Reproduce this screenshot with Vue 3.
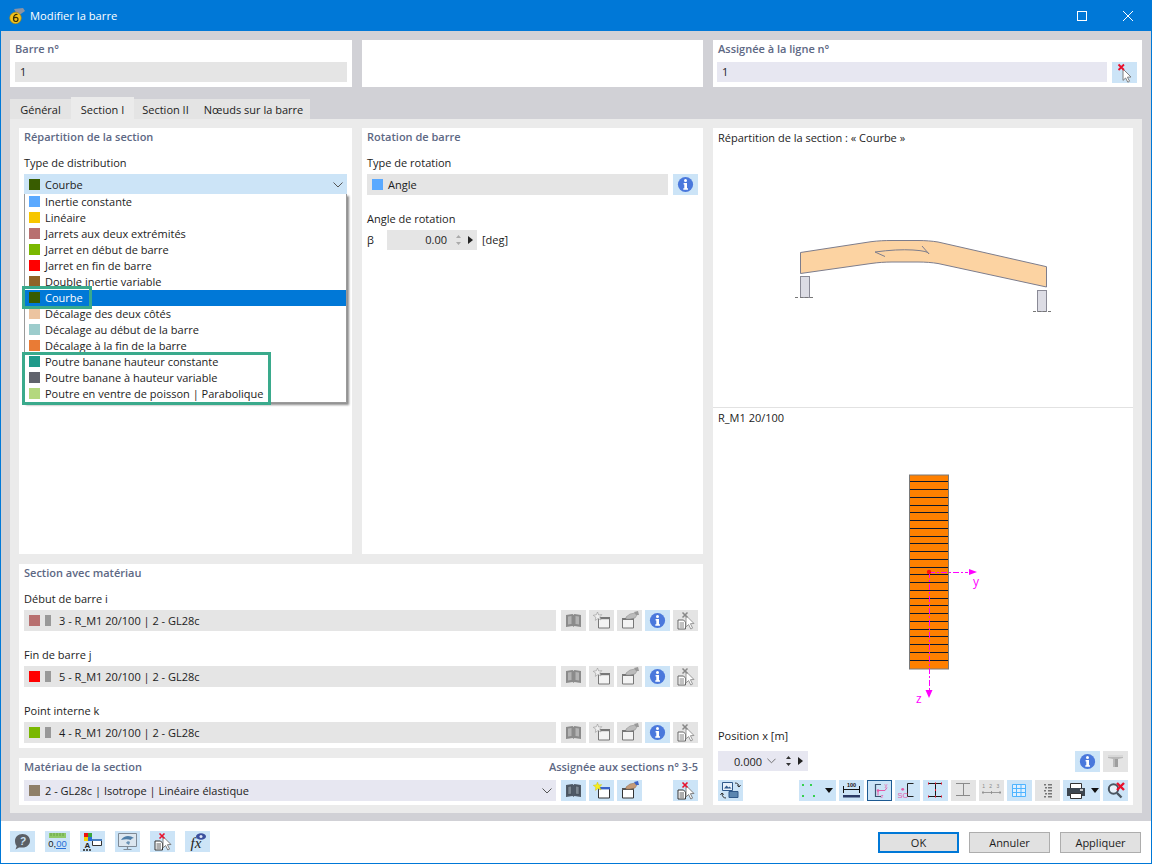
<script setup>
const options = [
  ['Inertie constante', '#5aa9ff'], ['Linéaire', '#f7c600'], ['Jarrets aux deux extrémités', '#b87070'],
  ['Jarret en début de barre', '#7ab800'], ['Jarret en fin de barre', '#ff0000'], ['Double inertie variable', '#8f6428'],
  ['Courbe', '#385c00'], ['Décalage des deux côtés', '#ecc4a0'], ['Décalage au début de la barre', '#9ccccc'],
  ['Décalage à la fin de la barre', '#e97b35'], ['Poutre banane hauteur constante', '#1f9a8a'],
  ['Poutre banane à hauteur variable', '#60636c'], ['Poutre en ventre de poisson | Parabolique', '#b4d87e'],
]
const sections = [
  ['Début de barre i', '#b87070', '3 - R_M1 20/100 | 2 - GL28c'],
  ['Fin de barre j', '#ff0000', '5 - R_M1 20/100 | 2 - GL28c'],
  ['Point interne k', '#7ab800', '4 - R_M1 20/100 | 2 - GL28c'],
]
const layers = [65,89,113,136,157,181,205,229,250,274,298,322,343,367,391,415,436,460,484,508,529,553,577,601].map(v => Math.floor(460 + v / 3) + 0.5)
</script>

<template>
  <svg class="defs" aria-hidden="true">
    <symbol id="i-info" viewBox="0 0 25 21">
      <circle cx="12.5" cy="10.5" r="7.6" fill="#4a78dc"/>
      <circle cx="12.5" cy="6.4" r="1.5" fill="#fff"/>
      <path d="M10.6 9h3.4v5.3h1v1.4h-4.7v-1.4h1V10.400h-.7z" fill="#fff"/>
    </symbol>
    <symbol id="i-book" viewBox="0 0 25 21">
      <path d="M5 5l6.6-1 .9 1 .9-1 6.6 1v12l-6.6-1-.9 1-.9-1-6.6 1z" fill="#4f5a66"/>
      <path d="M7 6.500l3.500-.5v8l-3.500.6zM18 6.500l-3.500-.5v8l3.500.6z" fill="#7c8790" stroke="#39424b" stroke-width=".5"/>
    </symbol>
    <symbol id="i-book-off" viewBox="0 0 25 21">
      <path d="M5 5l6.600-1 .9 1 .9-1 6.600 1v12l-6.600-1-.9 1-.9-1-6.600 1z" fill="#8b8b8b"/>
      <path d="M7 6.500l3.500-.5v8l-3.500.6zM18 6.500l-3.500-.5v8l3.500.6z" fill="#b3b3b3"/>
    </symbol>
    <symbol id="i-new" viewBox="0 0 25 21">
      <path d="M9.500 7.500h11V18h-11z" fill="#fff" stroke="#333"/>
      <path d="M9 7h12v2.400H9z" fill="#3a62c8"/>
      <path d="M8.500 2l1.200 3 3.100-.4-2 2.300 1.200 3-3-1.400-2.700 1.900.5-3.200-2.600-1.900 3.200-.6z" fill="#f6ee1f" stroke="#c7b900" stroke-width=".4"/>
    </symbol>
    <symbol id="i-new-off" viewBox="0 0 25 21">
      <path d="M9.500 7.500h11V18h-11z" fill="#f3f3f3" stroke="#777"/>
      <path d="M9 7h12v2.200H9z" fill="#777"/>
      <path d="M8.500 2l1.200 3 3.100-.4-2 2.300 1.200 3-3-1.400-2.700 1.900.5-3.200-2.600-1.900 3.200-.6z" fill="#eee" stroke="#999" stroke-width=".6"/>
    </symbol>
    <symbol id="i-edit" viewBox="0 0 25 21">
      <path d="M5.500 8.500h11V18h-11z" fill="#fff" stroke="#333"/>
      <path d="M5 8h12v2H5z" fill="#555"/>
      <path d="M9 7l4-3 5-1 2 2-2 3-5 1h-4z" fill="#c59a77" stroke="#8b6a50" stroke-width=".5"/>
      <path d="M17 2l4-1 1 4h-3z" fill="#3a62c8"/>
    </symbol>
    <symbol id="i-edit-off" viewBox="0 0 25 21">
      <path d="M5.500 8.500h11V18h-11z" fill="#f3f3f3" stroke="#777"/>
      <path d="M5 8h12v2H5z" fill="#777"/>
      <path d="M9 7l4-3 5-1 2 2-2 3-5 1h-4z" fill="#bbb" stroke="#888" stroke-width=".5"/>
      <path d="M17 2l4-1 1 4h-3z" fill="#999"/>
    </symbol>
    <symbol id="i-pick" viewBox="0 0 25 21">
      <path d="M5 10h5.500l2 2v7H5z" fill="#fff" stroke="#333"/>
      <path d="M6.500 13h4.500M6.500 15h4.500M6.500 17h4.500" stroke="#333" stroke-width=".8"/>
      <path d="M13 5.500l8 8-3.600.2 2.200 4.400-1.800.9-2.200-4.500-2.600 2.400z" fill="#fff" stroke="#7f7f7f"/>
      <path d="M9.500 2.500l5 5M14.500 2.500l-5 5" stroke="#e8112d" stroke-width="1.600"/>
    </symbol>
    <symbol id="i-pick-off" viewBox="0 0 25 21">
      <path d="M5 10h5.500l2 2v7H5z" fill="#fff" stroke="#666"/>
      <path d="M6.500 13h4.500M6.500 15h4.500M6.500 17h4.500" stroke="#666" stroke-width=".8"/>
      <path d="M13 5.500l8 8-3.600.2 2.200 4.400-1.800.9-2.200-4.500-2.600 2.400z" fill="#fff" stroke="#999"/>
      <path d="M9.500 2.500l5 5M14.500 2.500l-5 5" stroke="#888" stroke-width="1.500"/>
    </symbol>
    <symbol id="i-cursor" viewBox="0 0 25 21">
      <path d="M11 7l8 8-3.600.2 2.200 4-1.800 1-2.200-4.200-2.600 2.400z" fill="#fff" stroke="#7f7f7f"/>
      <path d="M6.500 2.500l5.500 5.500M12 2.500l-5.500 5.500" stroke="#e8112d" stroke-width="1.800"/>
    </symbol>
    <symbol id="i-t" viewBox="0 0 25 21">
      <path d="M5 4h15v3l-5 1v8h-5V8L5 7z" fill="#b9b9b9"/>
      <path d="M5 4h15v2H5z" fill="#d8d8d8"/>
      <path d="M12 8h3v8h-3z" fill="#9e9e9e"/>
    </symbol>
    <symbol id="i-swap" viewBox="0 0 25 21">
      <path d="M4.500 2.500h10v8h-10z" fill="#e8f1fa" stroke="#30598a"/>
      <path d="M6 8.500l2.500-3 2 2 1-1 2 2z" fill="#30598a"/>
      <path d="M11 11.500h9v6h-9z" fill="#5b86b0" stroke="#30598a"/>
      <path d="M17 3c2.500 0 4 1.500 4 4M21 7l-1.800-1.600M21 7l1.600-1.800M8 18c-2.500 0-4-1.500-4-5M4 13l-1.600 1.800M4 13l1.800 1.600" fill="none" stroke="#333"/>
    </symbol>
    <symbol id="i-beam" viewBox="0 0 25 21">
      <path d="M5 3.500h14M5 16.500h14M12.500 3.500v13" stroke="#1b1b1b"/>
      <path d="M5 3.500h1M18 3.500h1M5 16.500h1M18 16.500h1M12 3.500h1M12 16.500h1M12 10h1" stroke="#e8112d" stroke-width="2"/>
    </symbol>
    <symbol id="i-beam-off" viewBox="0 0 25 21">
      <path d="M5 3.500h14M5 15.500h14M12.500 3.500v12" stroke="#8a8a8a"/>
    </symbol>
    <symbol id="i-grid" viewBox="0 0 25 21">
      <path d="M5.500 4.500h13v12h-13zM9.500 4.500v12M14 4.500v12M5.500 8.500h13M5.500 12.500h13" fill="#dff0ff" stroke="#4fb4ff"/>
    </symbol>
    <symbol id="i-dots" viewBox="0 0 25 21">
      <path d="M9 4h2v1.500H9zM13 4h4v1.500h-4zM10 7h2v1.500h-2zM13 7h4v1.500h-4zM9 10h2v1.500H9zM13 10h4v1.500h-4zM10 13h2v1.500h-2zM13 13h4v1.500h-4zM9 16h2v1.500H9zM13 16h4v1.500h-4z" fill="#777"/>
    </symbol>
    <symbol id="i-mag" viewBox="0 0 25 21">
      <circle cx="10.500" cy="9" r="4.700" fill="#e8f1fa" stroke="#4a5560" stroke-width="2"/>
      <path d="M14 13l4.500 4.500" stroke="#4a5560" stroke-width="2.400"/>
      <path d="M14 3l7 7M21 3l-7 7" stroke="#e8112d" stroke-width="2.400"/>
    </symbol>
    <symbol id="i-monitor" viewBox="0 0 25 21">
      <path d="M3.500 2.500h18v13h-18z" fill="#dce6ef" stroke="#7f8a96"/>
      <path d="M6 9c3-5 9-5 13-2-2 0-3 1-3 2-3-1-6-1-10 0z" fill="#4f7ea8"/>
      <path d="M11 12c1-2 3-2 4-1l-1 3z" fill="#6a92b5"/>
      <path d="M12.500 15.500v3M8.500 18.500h8" stroke="#7f8a96" stroke-width="1.200"/>
    </symbol>
  </svg>

  <div class="win">
    <header class="title">
      <svg class="logo" viewBox="0 0 16 16">
        <path d="M5 1l9-1 2 3-7 5z" fill="#8a93a3"/>
        <circle cx="6.500" cy="10" r="5.800" fill="#f1c21b" stroke="#a98305" stroke-width=".6"/>
        <path d="M8.500 6.500C6 6 4.500 8 4.500 10.500s1 3 2.300 3 2.200-1 2.200-2.200-1-2-2.100-2-1.900.7-1.900.7" fill="none" stroke="#3a2f05" stroke-width="1.200"/>
      </svg>
      <span class="title-text">Modifier la barre</span>
      <svg class="wc max" viewBox="0 0 10 10"><rect x=".5" y=".5" width="9" height="9" fill="none" stroke="#fff"/></svg>
      <svg class="wc close" viewBox="0 0 10 10"><path d="M0 0l10 10M10 0L0 10" stroke="#fff"/></svg>
    </header>

    <main class="body">
      <section class="top">
        <div class="tcard w1">
          <div class="head">Barre n°</div>
          <div class="field gray">1</div>
        </div>
        <div class="tcard w1"></div>
        <div class="tcard w3">
          <div class="head hi">Assignée à la ligne n°</div>
          <div class="row-f">
            <div class="field lav grow">1</div>
            <span class="ib"><svg><use href="#i-cursor"/></svg></span>
          </div>
        </div>
      </section>

      <nav class="tabs">
        <span class="tab">Général</span>
        <span class="tab active">Section I</span>
        <span class="tab">Section II</span>
        <span class="tab wide">Nœuds sur la barre</span>
      </nav>

      <section class="pane">
        <div class="card c-dist">
          <div class="head2">Répartition de la section</div>
          <div class="lab">Type de distribution</div>
          <div class="combo">
            <div class="field blue">
              <i class="sw" style="background:#385c00"></i>Courbe
              <svg class="chev" viewBox="0 0 10 6"><path d="M.5.500L5 5 9.500.500" fill="none" stroke="#555"/></svg>
            </div>
            <div class="menu">
              <div v-for="o in options" :key="o[0]" class="opt" :class="{ sel: o[0] === 'Courbe' }">
                <i class="sw" :style="{ background: o[1] }"></i>{{ o[0] }}
              </div>
              <span class="mark m1"></span>
              <span class="mark m2"></span>
            </div>
          </div>
        </div>

        <div class="card c-rot">
          <div class="head2">Rotation de barre</div>
          <div class="lab">Type de rotation</div>
          <div class="row-f rot-row">
            <div class="field gray grow tall"><i class="sw" style="background:#5aa9ff"></i>Angle</div>
            <span class="ib"><svg><use href="#i-info"/></svg></span>
          </div>
          <div class="lab lab2">Angle de rotation</div>
          <div class="beta">
            <span class="beta-l">β</span>
            <div class="spin">
              <span class="val">0.00</span>
              <svg class="updown" viewBox="0 0 7 12"><path d="M3.500 1L6 4H1zM3.500 11L1 8h5z" fill="#aaa"/></svg>
              <svg class="play" viewBox="0 0 5 8"><path d="M0 0l5 4-5 4z" fill="#222"/></svg>
            </div>
            <span class="unit">[deg]</span>
          </div>
        </div>

        <div class="card c-view">
          <div class="v-top">
            <div class="v-title">Répartition de la section : « Courbe »</div>
            <svg class="beam-svg" viewBox="713 148 420 200">
              <path d="M800.500 252.500L871 241.700C878 240.800 885 240.500 892 240.500H918C925 240.500 932 241 938 242L1046.500 266.700V287L938 263.500C932 262.500 925 262 918 262H892C885 262 878 262.500 871 263.500L800.500 273.500z" fill="#fcd3a2" stroke="#7d7d8c"/>
              <path d="M885 256.500L875 252Q897 249 913 250T929 254L922 246" fill="none" stroke="#7d7d8c"/>
              <rect x="800.500" y="276.500" width="9" height="21" fill="#dcdce4" stroke="#8a8a96"/>
              <rect x="1037.500" y="290.500" width="9" height="21" fill="#dcdce4" stroke="#8a8a96"/>
              <path d="M795 297.500H814M1033 311.500H1052" stroke="#777" stroke-dasharray="3 2"/>
            </svg>
          </div>
          <div class="v-bot">
            <div class="v-title">R_M1 20/100</div>
            <svg class="sec-svg" viewBox="713 440 420 270">
              <rect x="909.500" y="475" width="39" height="194" fill="#ff8000" stroke="#7a7a7a"/>
              <path v-for="y in layers" :key="y" :d="`M910 ${y}H948`" stroke="#10182a"/>
              <path d="M929 572.500H968M929.500 572V691" stroke="#ff00ff" stroke-dasharray="6 2 2 2" fill="none"/>
              <path d="M969 569l8 3-8 3zM925.500 690l3.500 8 3.500-8z" fill="#ff00ff"/>
              <circle cx="929" cy="572" r="2.200" fill="#ff1010"/>
              <text x="973" y="586" class="ax">y</text>
              <text x="916" y="703" class="ax">z</text>
            </svg>
            <div class="v-pos">
              <div class="lab3">Position x [m]</div>
              <div class="pos-row">
                <div class="spin2">
                  <span class="val2">0.000</span>
                  <svg class="chev2" viewBox="0 0 10 6"><path d="M.5.500L5 5 9.500.500" fill="none" stroke="#666"/></svg>
                  <svg class="updown2" viewBox="0 0 7 12"><path d="M3.500 1L6 4H1zM3.500 11L1 8h5z" fill="#333"/></svg>
                  <svg class="play2" viewBox="0 0 5 8"><path d="M0 0l5 4-5 4z" fill="#222"/></svg>
                </div>
                <span class="grow"></span>
                <span class="ib"><svg><use href="#i-info"/></svg></span>
                <span class="ib off"><svg><use href="#i-t"/></svg></span>
              </div>
              <div class="tools">
                <span class="ib"><svg><use href="#i-swap"/></svg></span>
                <span class="grow"></span>
                <span class="ib wide-b">
                  <svg class="pts" viewBox="0 0 25 21"><path d="M3 4h2v2H3zM11 4h2v2h-2zM3 15h2v2H3zM14 15h2v2h-2z" fill="#35d04f"/></svg>
                  <svg class="drop" viewBox="0 0 8 5"><path d="M0 0h8L4 5z" fill="#111"/></svg>
                </span>
                <span class="ib">
                  <svg viewBox="0 0 25 21">
                    <path d="M4.500 6v7M20.500 6v7M4 9.500h17" stroke="#111" fill="none"/>
                    <path d="M4 15h17v2.500H4z" fill="#2b3a66"/>
                    <text x="12.500" y="6.500" font-size="5.500" font-weight="700" text-anchor="middle" font-family="Liberation Sans, sans-serif" fill="#111">100</text>
                  </svg>
                </span>
                <span class="ib cur">
                  <svg viewBox="0 0 25 21">
                    <path d="M14 4.500H8.500v12H14" fill="none" stroke="#39526e" stroke-width="1.200"/>
                    <path d="M11 10.500h7l2-3M11 10.500v5" fill="none" stroke="#e45aa8"/>
                    <circle cx="11" cy="10.500" r="1.300" fill="#e45aa8"/>
                    <text x="19" y="7" font-size="6" text-anchor="middle" font-family="Liberation Sans, sans-serif" fill="#e45aa8">y</text>
                    <text x="15" y="18" font-size="6" text-anchor="middle" font-family="Liberation Sans, sans-serif" fill="#e45aa8">z</text>
                  </svg>
                </span>
                <span class="ib">
                  <svg viewBox="0 0 25 21">
                    <path d="M18.500 3.500h-6v13h6" fill="none" stroke="#222"/>
                    <circle cx="7.700" cy="9.300" r="1.400" fill="#e45aa8"/>
                    <text x="7.700" y="18" font-size="7.500" text-anchor="middle" font-family="Liberation Sans, sans-serif" fill="#e45aa8">SC</text>
                  </svg>
                </span>
                <span class="ib"><svg><use href="#i-beam"/></svg></span>
                <span class="ib off"><svg><use href="#i-beam-off"/></svg></span>
                <span class="ib off">
                  <svg viewBox="0 0 25 21">
                    <text x="12.500" y="8" font-size="5" letter-spacing="1.500" text-anchor="middle" font-family="Liberation Sans, sans-serif" fill="#888">1 2 3</text>
                    <path d="M3 12.500h19M4 11v3M12.500 11v3M21 11v3" stroke="#888" stroke-width=".8"/>
                  </svg>
                </span>
                <span class="ib"><svg><use href="#i-grid"/></svg></span>
                <span class="ib off"><svg><use href="#i-dots"/></svg></span>
                <span class="ib wide-b">
                  <svg class="prt" viewBox="0 0 22 21">
                    <path d="M5.500 3.500h11v5h-11z" fill="#fff" stroke="#333"/>
                    <path d="M2 8h18v8H2z" fill="#3c4650"/>
                    <path d="M5.500 13.500h11v5h-11z" fill="#fff" stroke="#333"/>
                    <path d="M15 10h3" stroke="#fff" stroke-width="1.400"/>
                  </svg>
                  <svg class="drop" viewBox="0 0 8 5"><path d="M0 0h8L4 5z" fill="#111"/></svg>
                </span>
                <span class="ib"><svg><use href="#i-mag"/></svg></span>
              </div>
            </div>
          </div>
        </div>

        <div class="card c-sec">
          <div class="head2">Section avec matériau</div>
          <div v-for="s in sections" :key="s[0]" class="sec-item">
            <div class="lab">{{ s[0] }}</div>
            <div class="row-f">
              <div class="field gray grow tall sec-f">
                <i class="sw" :style="{ background: s[1] }"></i><i class="mini"></i>{{ s[2] }}
              </div>
              <span class="ib off"><svg><use href="#i-book-off"/></svg></span>
              <span class="ib off"><svg><use href="#i-new-off"/></svg></span>
              <span class="ib off"><svg><use href="#i-edit-off"/></svg></span>
              <span class="ib"><svg><use href="#i-info"/></svg></span>
              <span class="ib off"><svg><use href="#i-pick-off"/></svg></span>
            </div>
          </div>
        </div>

        <div class="card c-mat">
          <div class="mat-head">
            <span class="head2 flat">Matériau de la section</span>
            <span class="head2 flat">Assignée aux sections n° 3-5</span>
          </div>
          <div class="row-f">
            <div class="field lav grow tall sec-f">
              <i class="sw" style="background:#8f7f68"></i>2 - GL28c | Isotrope | Linéaire élastique
              <svg class="chev" viewBox="0 0 10 6"><path d="M.5.500L5 5 9.500.500" fill="none" stroke="#555"/></svg>
            </div>
            <span class="ib"><svg><use href="#i-book"/></svg></span>
            <span class="ib"><svg><use href="#i-new"/></svg></span>
            <span class="ib"><svg><use href="#i-edit"/></svg></span>
            <span class="ib ghost"></span>
            <span class="ib"><svg><use href="#i-pick"/></svg></span>
          </div>
        </div>
      </section>
    </main>

    <footer class="foot">
      <div class="foot-icons">
        <span class="ib">
          <svg viewBox="0 0 25 21">
            <path d="M12.500 3c4.700 0 7.500 3 7.500 6.800s-3 6.800-7.500 6.800H9l-3.500 2 1.200-3.500C5.500 14 5 12 5 9.800 5 6 8 3 12.500 3z" fill="#5a5f66"/>
            <text x="12.800" y="14" font-size="10" font-weight="700" font-style="italic" text-anchor="middle" font-family="Liberation Sans, sans-serif" fill="#cce4f7">?</text>
          </svg>
        </span>
        <span class="ib">
          <svg viewBox="0 0 25 21">
            <path d="M4 2h17v5H4z" fill="#8fc96a"/>
            <path d="M6 5V2M9 5V2M12 5V2M15 5V2M18 5V2" stroke="#5d9b3c" stroke-width=".8"/>
            <text x="12.500" y="16" font-size="9.500" text-anchor="middle" font-family="Liberation Sans, sans-serif" fill="#1a1a1a">0,<tspan fill="#2a6fd6">00</tspan></text>
            <path d="M11 17.500h10" stroke="#2a6fd6"/>
          </svg>
        </span>
        <span class="ib">
          <svg viewBox="0 0 25 21">
            <path d="M4 2h4v4H4z" fill="#e11"/><path d="M8 2h4v4H8z" fill="#3aa63a"/>
            <path d="M4 6h4v4H4z" fill="#f5d000"/><path d="M8 6h4v4H8z" fill="#2a6fd6"/>
            <path d="M12.500 8.500h9v6h-9z" fill="#fff" stroke="#333"/><path d="M12 8h10v2H12z" fill="#4a7fc0"/>
            <text x="7.500" y="17" font-size="8" font-weight="700" text-anchor="middle" font-family="Liberation Sans, sans-serif" fill="#222">A</text>
            <path d="M3 19h2M6 19h2M9 19h2" stroke="#222" stroke-width="1.400"/>
          </svg>
        </span>
        <span class="ib"><svg><use href="#i-monitor"/></svg></span>
        <span class="ib"><svg><use href="#i-pick"/></svg></span>
        <span class="ib">
          <svg viewBox="0 0 25 21">
            <text x="11" y="17" font-size="15" font-style="italic" text-anchor="middle" font-family="Liberation Serif, serif" fill="#222">fx</text>
            <ellipse cx="16" cy="5.500" rx="5" ry="3.300" fill="#3b4f9e"/>
            <circle cx="16" cy="5.500" r="1.500" fill="#dfe6f7"/>
          </svg>
        </span>
      </div>
      <div class="foot-btns">
        <button class="btn def">OK</button>
        <button class="btn">Annuler</button>
        <button class="btn">Appliquer</button>
      </div>
      <svg class="grip" viewBox="0 0 9 9"><path d="M6 0h2v2H6zM3 3h2v2H3zM6 3h2v2H6zM0 6h2v2H0zM3 6h2v2H3zM6 6h2v2H6z" fill="#b5b5b5"/></svg>
    </footer>
  </div>
</template>

<style scoped>
.defs { display: block; width: 0; height: 0; overflow: hidden; }
.win {
  position: relative;
  width: 1152px;
  height: 864px;
  box-sizing: border-box;
  display: flex;
  flex-direction: column;
  background: #fff;
  border: 1px solid #0078d7;
  border-top: 0;
  font-family: "Open Sans", "Noto Sans", sans-serif;
  font-size: 11px;
  color: #1c1c1c;
  overflow: hidden;
}
.title {
  height: 31px;
  flex: none;
  display: flex;
  align-items: center;
  background: #0078d7;
  color: #fff;
  margin: 0 -1px;
}
.logo { width: 16px; height: 16px; margin-left: 9px; margin-right: 5px; }
.title-text { font-size: 11.2px; flex: 1; }
.wc { width: 10px; height: 10px; }
.max { margin-right: 36px; }
.close { margin-right: 19px; }
.body {
  flex: 1;
  background: #d1d1d6;
  padding: 9px 9px 8px;
  display: flex;
  flex-direction: column;
}
.top { display: flex; gap: 10px; height: 47px; flex: none; }
.tcard { background: #fff; box-sizing: border-box; padding: 0 5px; }
.w1 { width: 342px; }
.tcard.w1:nth-child(2) { width: 341px; }
.w3 { width: 429px; padding-left: 4px; }
.head { font-weight: 600; color: #5d6884; height: 22px; line-height: 17px; }
.hi { padding-left: 1px; }
.field {
  position: relative;
  height: 20px;
  display: flex;
  align-items: center;
  box-sizing: border-box;
  padding: 0 0 2px 5px;
}
.gray { background: #e5e5e5; }
.lav { background: #e7e7f1; }
.blue { background: #cce4f7; padding-bottom: 0; }
.grow { flex: 1; }
.tall { height: 21px; padding-bottom: 0; }
.row-f { display: flex; gap: 3px; }
.w3 .row-f, .rot-row { gap: 5px; }
.ib {
  flex: none;
  width: 25px;
  height: 21px;
  background: #cce4f7;
  display: flex;
  align-items: center;
  justify-content: center;
  box-sizing: border-box;
}
.ib svg { width: 25px; height: 21px; display: block; flex: none; }
.off { background: #e4e4e4; }
.ghost { background: transparent; }
.cur { border: 1px solid #1d5a92; }
.cur svg { margin: -1px; }
.wide-b { width: 37px; justify-content: flex-start; }
.ib .prt { width: 22px; margin-left: 2px; margin-right: 2px; }
.ib .drop { width: 8px; height: 5px; margin-left: 1px; }
.ib .prt + .drop { margin-left: 2px; }

.tabs { display: flex; align-items: flex-end; height: 32px; flex: none; }
.tab {
  height: 20px;
  line-height: 22px;
  background: #e4e4e4;
  text-align: center;
  width: 63px;
}
.tab:first-child { width: 61px; }
.wide { width: 113px; }
.active { height: 22px; line-height: 26px; background: #ebebeb; }

.pane {
  flex: none;
  height: 694px;
  box-sizing: border-box;
  background: #ebebeb;
  padding: 9px;
  display: grid;
  grid-template-columns: 333px 341px 420px;
  grid-template-rows: 426px 184px 47px;
  gap: 10px;
}
.card { background: #fff; box-sizing: border-box; padding: 0 5px; }
.c-view { grid-column: 3; grid-row: 1 / 4; padding: 0; display: flex; flex-direction: column; }
.c-sec { grid-column: 1 / 3; grid-row: 2; }
.c-mat { grid-column: 1 / 3; grid-row: 3; }
.head2 { font-weight: 600; color: #5d6884; height: 26px; line-height: 18px; }
.flat { height: 22px; }
.lab { height: 20px; line-height: 18px; }
.lab2 { margin-top: 15px; }
.combo { position: relative; }
.sw { width: 11px; height: 11px; flex: none; margin-right: 5px; display: block; }
.chev { position: absolute; right: 4px; top: 8px; width: 10px; height: 6px; }
.menu {
  position: absolute;
  left: 0;
  right: 0;
  top: 20px;
  box-sizing: border-box;
  background: #fff;
  border: 1px solid #9a9a9a;
  border-top: 0;
  box-shadow: 2px 2px 2px rgba(0,0,0,.45);
  height: 209px;
}
.opt {
  height: 16px;
  box-sizing: border-box;
  display: flex;
  align-items: center;
  padding: 0 0 2px 4px;
}
.sel { background: #0078d7; color: #fff; }
.mark { position: absolute; border: 3px solid #3aaa8c; box-sizing: border-box; pointer-events: none; }
.m1 { left: -3px; top: 92px; width: 70px; height: 23px; }
.m2 { left: -3px; top: 158px; width: 249px; height: 53px; }
.beta { display: flex; align-items: center; height: 20px; }
.beta-l { width: 20px; padding-bottom: 2px; }
.spin {
  width: 90px;
  height: 20px;
  background: #e5e5e5;
  display: flex;
  align-items: center;
}
.val { width: 60px; text-align: right; padding-bottom: 2px; }
.updown { width: 7px; height: 12px; margin-left: 8px; }
.play { width: 5px; height: 8px; margin-left: 6px; }
.unit { margin-left: 5px; padding-bottom: 2px; }
.sec-item { height: 56px; }
.sec-f { margin-right: 2px; }
.mini { width: 6px; height: 11px; background: #999; margin: 0 8px 0 0; display: block; flex: none; }
.mat-head { display: flex; justify-content: space-between; height: 22px; }
.v-top { height: 279px; border-bottom: 1px solid #e2e2e2; flex: none; }
.v-title { padding: 0 5px; height: 20px; line-height: 20px; }
.beam-svg { display: block; width: 420px; height: 200px; }
.v-bot { flex: 1; display: flex; flex-direction: column; }
.sec-svg { display: block; width: 420px; height: 270px; margin-top: 12px; flex: none; }
.v-pos { padding: 0 5px; margin-top: 17px; }
.lab3 { height: 24px; line-height: 18px; }
.pos-row { display: flex; gap: 3px; height: 21px; }
.spin2 {
  width: 90px;
  height: 20px;
  background: #e7e7f1;
  display: flex;
  align-items: center;
}
.val2 { margin-left: 16px; width: 30px; }
.chev2 { width: 9px; height: 6px; margin-left: 3px; }
.updown2 { width: 7px; height: 12px; margin-left: 9px; }
.play2 { width: 5px; height: 8px; margin-left: 6px; }
.tools { display: flex; gap: 3px; margin-top: 8px; }

.foot {
  flex: none;
  height: 42px;
  display: flex;
  align-items: flex-start;
  justify-content: space-between;
  padding: 10px 10px 0 9px;
  position: relative;
}
.foot-icons { display: flex; gap: 10px; }
.foot-btns { display: flex; gap: 10px; margin-top: 1px; }
.btn {
  width: 81px;
  height: 21px;
  box-sizing: border-box;
  background: #e1e1e1;
  border: 1px solid #adadad;
  font: inherit;
  color: #1c1c1c;
  padding: 0;
}
.def { border: 2px solid #0078d7; }
.grip { position: absolute; right: 1px; bottom: 1px; width: 9px; height: 9px; }
</style>

<style>
.ax { font: 12px "Open Sans", sans-serif; fill: #ff00ff; }
</style>
